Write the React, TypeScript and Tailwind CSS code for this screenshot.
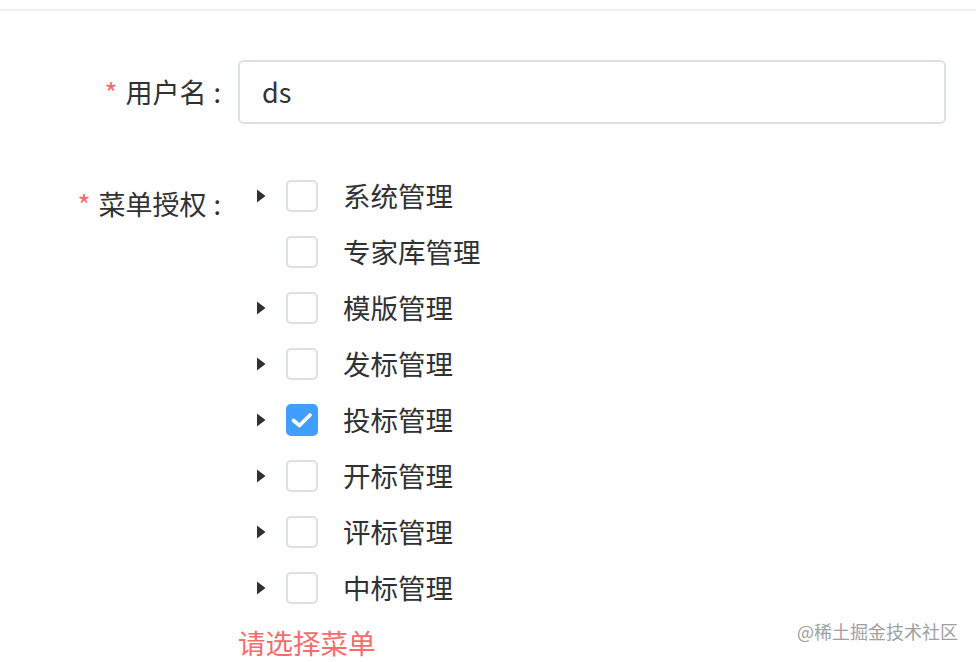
import { useState } from "react";

const MENUS = [
  { name: "系统管理", children: true },
  { name: "专家库管理", children: false },
  { name: "模版管理", children: true },
  { name: "发标管理", children: true },
  { name: "投标管理", children: true },
  { name: "开标管理", children: true },
  { name: "评标管理", children: true },
  { name: "中标管理", children: true },
];

function Caret() {
  return (
    <svg width="10" height="14" viewBox="0 0 10 14" className="block">
      <path d="M1 0.5 L9.5 7 L1 13.5 Z" fill="#303133" />
    </svg>
  );
}

function Check({ checked }: { checked: boolean }) {
  return (
    <span
      className={
        checked
          ? "flex h-8 w-8 items-center justify-center rounded-[5px] border-2 border-[#409eff] bg-[#409eff]"
          : "flex h-8 w-8 items-center justify-center rounded-[5px] border-2 border-[#dcdfe6] bg-white"
      }
    >
      {checked && (
        <svg width="22" height="16" viewBox="0 0 22 16">
          <path
            d="M2.5 8.5 L8.5 13.5 L19 3"
            fill="none"
            stroke="white"
            strokeWidth="3.6"
            strokeLinecap="round"
            strokeLinejoin="round"
          />
        </svg>
      )}
    </span>
  );
}

function Label({ text }: { text: string }) {
  return (
    <>
      <span className="mr-[8px] text-[28px] text-[#f56c6c]">*</span>
      {text}
      <span className="ml-[7px]">:</span>
    </>
  );
}

export default function App() {
  const [checked, setChecked] = useState<Record<string, boolean>>({ 投标管理: true });

  return (
    <div
      className="relative h-[662px] w-[976px] overflow-hidden bg-white text-[#303133]"
      style={{ fontFamily: '"Noto Sans CJK SC", "Noto Sans", sans-serif' }}
    >
      <div className="mt-[9px] h-[2px] w-full bg-[#f0f0f2]" />

      {/* 用户名 */}
      <div className="mt-[49px] flex items-center">
        <label className="flex w-[238px] items-center justify-end pr-[17px] text-[27px] leading-[64px]">
          <Label text="用户名" />
        </label>
        <div className="flex h-[64px] w-[708px] items-center rounded-[6px] border-2 border-[#dcdfe6] px-[22px] text-[27px] text-[#303133]">
          ds
        </div>
      </div>

      {/* 菜单授权 */}
      <div className="mt-[44px] flex">
        <label className="flex h-[68px] w-[238px] items-end justify-end pr-[17px] text-[27px] leading-[64px]">
          <Label text="菜单授权" />
        </label>
        <div className="flex flex-col">
          {MENUS.map((m) => (
            <div
              key={m.name}
              className="flex h-[56px] cursor-pointer items-center"
              onClick={() => setChecked((c) => ({ ...c, [m.name]: !c[m.name] }))}
            >
              <span className="flex w-[48px] justify-end pr-[20px]">
                {m.children ? <Caret /> : <span className="w-[10px]" />}
              </span>
              <Check checked={!!checked[m.name]} />
              <span className="ml-[25px] text-[27.5px] leading-none">{m.name}</span>
            </div>
          ))}
          <div className="mt-[8px] text-[27.5px] leading-[36px] text-[#f56c6c]">请选择菜单</div>
        </div>
      </div>

      <div className="absolute right-[18px] top-[618px] text-[18px] text-[#a0a0a0]">@稀土掘金技术社区</div>
    </div>
  );
}
